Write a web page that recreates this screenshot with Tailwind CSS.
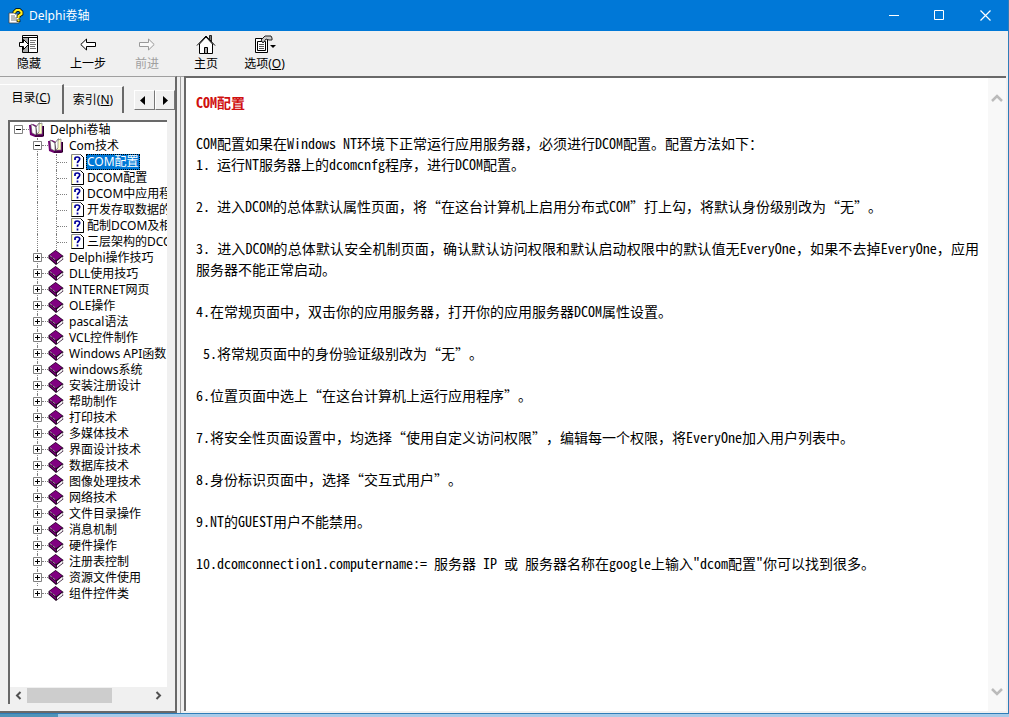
<!DOCTYPE html>
<html lang="zh-CN">
<head>
<meta charset="utf-8">
<meta name="viewport" content="width=device-width, initial-scale=1">
<title>Delphi卷轴</title>
<script src="https://cdn.jsdelivr.net/npm/@tailwindcss/browser@4"></script>
</head>
<body class="h-screen overflow-hidden bg-[#a9cbe8] font-['Noto_Sans','Noto_Sans_CJK_SC',sans-serif] text-xs text-black">
<svg class="hidden" aria-hidden="true">
  <symbol id="open" viewBox="0 0 16 16"><path d="M0 3h2l2-1 4 2h6l1 1v9l-2 1H6l-5-2z" fill="#700070"/><path d="M14.500 4v10H6" fill="none" stroke="#200020"/><path d="M2 2l5 3v8L3 11z" fill="#fff" stroke="#555" stroke-width=".6"/><path d="M7 5l3-4h1v8l-3 4z" fill="#fff" stroke="#333" stroke-width=".6"/><path d="M10 2l3-1v11H8l2-2z" fill="#ffffc8" stroke="#666" stroke-width=".6"/></symbol>
  <symbol id="book" viewBox="0 0 16 16"><path d="M7.500 0L0 5.500V9l8 7 8-6.500-1-1 1-2z" fill="#200020"/><path d="M7.500 .8L1 5.500l7.500 5.200L14.500 6z" fill="#800080"/><path d="M1 7v1.500l7 6v-2z" fill="#800080"/><path d="M9 12l6-5v2.500l-6 5z" fill="#fff"/><path d="M1.500 6l6.500 5" stroke="#fff" stroke-width="1" stroke-dasharray="1 1"/></symbol>
  <symbol id="page" viewBox="0 0 13 15"><path d="M.5.5h9l3 3v11H.5z" fill="#fff" stroke="#888"/><path d="M1.500 1v12.500" stroke="#ffffa0"/><path d="M12.500 3v11.500H.5M9.500.5l3 3" fill="none" stroke="#000"/><path d="M4 6V4.500Q4 3 6.300 3T8.700 5Q8.700 6 7.500 7T6.500 9.200M6.500 10.500v2" fill="none" stroke="#000098" stroke-width="1.700"/></symbol>
  <symbol id="plus" viewBox="0 0 9 9"><path d="M.5.5h8v8h-8z" fill="#fff" stroke="#808080"/><path d="M2 4.500h5M4.500 2v5" stroke="#000"/></symbol>
  <symbol id="minus" viewBox="0 0 9 9"><path d="M.5.5h8v8h-8z" fill="#fff" stroke="#808080"/><path d="M2 4.500h5" stroke="#000"/></symbol>
</svg>
<div class="flex h-full flex-col bg-linear-to-r from-[#4f93b8] from-[58px] to-[#a9cbe8] to-[58px] pb-[3px]">
  <div class="flex min-h-0 flex-1 flex-col border-r border-b border-[#2f7db8] bg-[#f0f0f0]">
    <header class="flex h-[31px] shrink-0 items-center bg-[#0078d7] pl-2 text-white">
      <svg class="h-4 w-4" viewBox="0 0 16 16"><path d="M1 5h6v1h4v9H1z" fill="#fff" stroke="#444" stroke-width=".8"/><path d="M3 8h4M3 10h6M3 12h6" stroke="#777"/><path d="M6.500 5V4l2-2h3l2 2v2l-3 2v2M10.500 11.500v2.500" fill="none" stroke="#000" stroke-width="3.600"/><path d="M6.500 5V4l2-2h3l2 2v2l-3 2v2M10.500 11.500v2" fill="none" stroke="#ffee20" stroke-width="2.200"/></svg>
      <h1 class="ml-[5px]">Delphi卷轴</h1>
      <div class="ml-auto flex">
        <button aria-label="最小化" class="flex h-[31px] w-[45px] items-center justify-center"><svg class="h-[11px] w-[11px]" viewBox="0 0 11 11"><path d="M0 5.500h10" stroke="#fff"/></svg></button>
        <button aria-label="最大化" class="flex h-[31px] w-[45px] items-center justify-center"><svg class="h-[11px] w-[11px]" viewBox="0 0 11 11"><path d="M.5.5h9v9h-9z" fill="none" stroke="#fff"/></svg></button>
        <button aria-label="关闭" class="flex h-[31px] w-[46px] items-center justify-center"><svg class="h-[11px] w-[11px]" viewBox="0 0 11 11"><path d="M.5.5l10 10M10.500.5l-10 10" stroke="#fff" stroke-width="1.200"/></svg></button>
      </div>
    </header>
    <nav class="flex h-[45px] shrink-0 text-center leading-[18px]">
      <button class="flex w-[58px] flex-col items-center pt-[4px]"><svg class="h-5 w-[22px]" viewBox="0 0 22 20"><path d="M4.500 .5h15v17h-15z" fill="#fff" stroke="#000"/><path d="M4 2.500h16M10.500 2v15" stroke="#000"/><path d="M5 3h5v14H5z" fill="#aaa"/><path d="M12 5.500h6M12 7.500h5M12 9.500h6M12 11.500h5M12 13.500h6" stroke="#777"/><path d="M1.500 7.500h4v-3l5 5-5 5v-3h-4z" fill="#fff" stroke="#000"/></svg><span>隐藏</span></button>
      <button class="flex w-[60px] flex-col items-center pt-[4px]"><svg class="h-5 w-4" viewBox="0 0 16 20"><path d="M.8 9.500L6.500 4v3.500h9v4h-9V15z" fill="#fff" stroke="#000"/></svg><span>上一步</span></button>
      <button disabled class="flex w-[58px] flex-col items-center pt-[4px] text-[#a0a0a0]"><svg class="h-5 w-4" viewBox="0 0 16 20"><path d="M15.200 9.500L9.500 4v3.500h-9v4h9V15z" fill="#f8f8f8" stroke="#999"/></svg><span>前进</span></button>
      <button class="flex w-[60px] flex-col items-center pt-[4px]"><svg class="h-5 w-5" viewBox="0 0 20 20"><path d="M3.500 9v9.500h13V9L10 2z" fill="#fff" stroke="#000"/><path d="M13.500 .5h2v6l-2-2z" fill="#777" stroke="#000" stroke-width=".8"/><path d="M1 10.500l9-9.500 9 9.500" fill="none" stroke="#000"/><path d="M8.500 12.500h3v6h-3z" fill="#aaa" stroke="#000"/></svg><span>主页</span></button>
      <button class="flex w-[57px] flex-col items-center pt-[4px]"><svg class="h-5 w-[22px]" viewBox="0 0 22 20"><path d="M1.500 3.500h12v14h-12z" fill="#fff" stroke="#000"/><path d="M3.500 6.500h8v9h-8z" fill="#fff" stroke="#000"/><path d="M5 9.500h5M5 11.500h5M5 13.500h5" stroke="#555"/><path d="M7 5l4-4h6l1 2v2h-3l-3-1-3 4z" fill="#ccc" stroke="#222"/><path d="M16 10h6l-3 3z"/></svg><span>选项(<u>O</u>)</span></button>
    </nav>
    <div class="flex min-h-0 flex-1">
      <aside class="flex w-[177px] shrink-0 flex-col border-t border-r-2 border-b-2 border-t-[#a0a0a0] border-r-[#696969] border-b-[#696969]">
        <div class="flex h-[37px] shrink-0 pt-[7px]" role="tablist">
          <button role="tab" aria-selected="true" class="h-[30px] w-[64px] border-t border-r-2 border-t-white border-r-[#696969] pb-1 text-center">目录(<u>C</u>)</button>
          <button role="tab" class="mt-[2px] h-[27px] w-[60px] border-t border-r-2 border-t-white border-r-[#696969] text-center">索引(<u>N</u>)</button>
          <div class="mt-[6px] ml-[10px] flex h-5">
            <button aria-label="向左" class="flex w-[21px] items-center justify-center border border-t-white border-r-[#777] border-b-[#777] border-l-white pr-1"><svg class="h-[9px] w-[5px]" viewBox="0 0 5 9"><path d="M5 0v9L0 4.500z"/></svg></button>
            <button aria-label="向右" class="flex w-[20px] items-center justify-center border border-t-white border-r-[#777] border-b-[#777] border-l-white"><svg class="h-[9px] w-[5px]" viewBox="0 0 5 9"><path d="M0 0v9l5-4.500z"/></svg></button>
          </div>
        </div>
        <div class="mx-[8px] mt-[6px] mb-[7px] flex min-h-0 flex-1 flex-col border-t-2 border-l-2 border-[#696969] bg-white">
          <ul id="tree" class="min-h-0 flex-1 overflow-hidden whitespace-nowrap" role="tree"></ul>
          <div class="flex h-[17px] shrink-0 items-center bg-[#f0f0f0]">
            <button aria-label="向左滚动" class="flex w-[17px] justify-center"><svg class="h-[9px] w-[7px]" viewBox="0 0 7 9"><path d="M5.500 1L2 4.500 5.500 8" fill="none" stroke="#505050" stroke-width="2"/></svg></button>
            <div class="h-[15px] w-[85px] bg-[#cdcdcd]"></div>
            <button aria-label="向右滚动" class="ml-auto flex w-[17px] justify-center"><svg class="h-[9px] w-[7px]" viewBox="0 0 7 9"><path d="M1.500 1L5 4.500 1.500 8" fill="none" stroke="#505050" stroke-width="2"/></svg></button>
          </div>
        </div>
      </aside>
      <div class="w-[7px] shrink-0 border-t border-[#a0a0a0] pl-[3px]"><div class="h-full border-l border-[#a0a0a0]"></div></div>
      <main class="mr-[2px] mb-[2px] flex min-w-0 flex-1 border-t-2 border-l-2 border-[#696969] bg-white">
        <article class="min-w-0 flex-1 pt-[14px] pr-[9px] pl-[10px] text-justify font-['Noto_Sans_Mono_CJK_SC','Noto_Sans_CJK_SC',monospace] text-sm leading-[21px] whitespace-pre-wrap [text-spacing-trim:space-all] [&_span]:[font-feature-settings:'hwid']"><h2 class="mb-5 font-bold text-[#d01010]"><span>COM</span>配置</h2><p><span>COM</span>配置如果在<span>Windows NT</span>环境下正常运行应用服务器，必须进行<span>DCOM</span>配置。配置方法如下：
<span>1. </span>运行<span>NT</span>服务器上的<span>dcomcnfg</span>程序，进行<span>DCOM</span>配置。

<span>2. </span>进入<span>DCOM</span>的总体默认属性页面，将“在这台计算机上启用分布式<span>COM</span>”打上勾，将默认身份级别改为“无”。

<span>3. </span>进入<span>DCOM</span>的总体默认安全机制页面，确认默认访问权限和默认启动权限中的默认值无<span>EveryOne</span>，如果不去掉<span>EveryOne</span>，应用服务器不能正常启动。

<span>4.</span>在常规页面中，双击你的应用服务器，打开你的应用服务器<span>DCOM</span>属性设置。

<span> 5.</span>将常规页面中的身份验证级别改为“无”。

<span>6.</span>位置页面中选上“在这台计算机上运行应用程序”。

<span>7.</span>将安全性页面设置中，均选择“使用自定义访问权限”，编辑每一个权限，将<span>EveryOne</span>加入用户列表中。

<span>8.</span>身份标识页面中，选择“交互式用户”。

<span>9.NT</span>的<span>GUEST</span>用户不能禁用。

<span>10.dcomconnection1.computername:= </span>服务器<span> IP </span>或<span> </span>服务器名称在<span>google</span>上输入<span>"dcom</span>配置<span>"</span>你可以找到很多。</p></article>
        <div class="flex w-[18px] shrink-0 flex-col items-center justify-between bg-[#f8f8f8] pt-[15px] pb-[14px]">
          <button aria-label="向上滚动"><svg class="h-[10px] w-3" viewBox="0 0 12 10"><path d="M1 8l5-5 5 5" fill="none" stroke="#bbb" stroke-width="2.500"/></svg></button>
          <button aria-label="向下滚动"><svg class="h-[10px] w-3" viewBox="0 0 12 10"><path d="M1 2l5 5 5-5" fill="none" stroke="#bbb" stroke-width="2.500"/></svg></button>
        </div>
      </main>
    </div>
  </div>
</div>
<script>
const tree = document.getElementById('tree');
const row = (indent, box, icon, iconClass, text, textClass) => {
  const li = document.createElement('li');
  li.setAttribute('role', 'treeitem');
  li.className = 'flex h-4 items-start leading-4 ' + indent;
  li.innerHTML = box + '<svg class="' + iconClass + '"><use href="#' + icon + '"/></svg><span class="' + textClass + '">' + text + '</span>';
  tree.append(li);
};
const toggle = id => '<svg class="mt-[3px] h-[9px] w-[9px] shrink-0"><use href="#' + id + '"/></svg><i class="mt-[7px] w-[6px] shrink-0 border-t border-dotted border-[#808080]"></i>';
const trunk = 'ml-[27px] border-l border-dotted border-[#808080]';
const lastTrunk = 'ml-[27px] border-l border-transparent';
const branch = id => '<i class="-ml-[5px] flex shrink-0">' + toggle(id) + '</i>';
row('pl-1', toggle('minus'), 'open', 'h-4 w-4 shrink-0', 'Delphi卷轴', 'ml-[5px]');
row(trunk, branch('minus'), 'open', 'h-4 w-4 shrink-0', 'Com技术', 'ml-1 pl-px');
['COM配置', 'DCOM配置', 'DCOM中应用程', '开发存取数据的', '配制DCOM及相', '三层架构的DCO'].forEach((t, i) =>
  row(trunk, '<i class="ml-[18px] h-4 w-[15px] shrink-0 border-l border-dotted border-[#808080] pt-[8px]"><b class="mr-1 block border-t border-dotted border-[#808080]"></b></i>', 'page', 'h-[15px] w-[13px] shrink-0', t, i ? 'ml-[2px] pl-px' : 'ml-[2px] bg-[#0078d7] px-px text-white outline-1 -outline-offset-1 outline-dotted outline-black'));
['Delphi操作技巧', 'DLL使用技巧', 'INTERNET网页', 'OLE操作', 'pascal语法', 'VCL控件制作', 'Windows API函数', 'windows系统', '安装注册设计', '帮助制作', '打印技术', '多媒体技术', '界面设计技术', '数据库技术', '图像处理技术', '网络技术', '文件目录操作', '消息机制', '硬件操作', '注册表控制', '资源文件使用', '组件控件类'].forEach((t, i, all) =>
  row(i < all.length - 1 ? trunk : lastTrunk, branch('plus'), 'book', 'h-[15px] w-4 shrink-0', t, 'ml-1 pl-px'));
</script>
</body>
</html>
